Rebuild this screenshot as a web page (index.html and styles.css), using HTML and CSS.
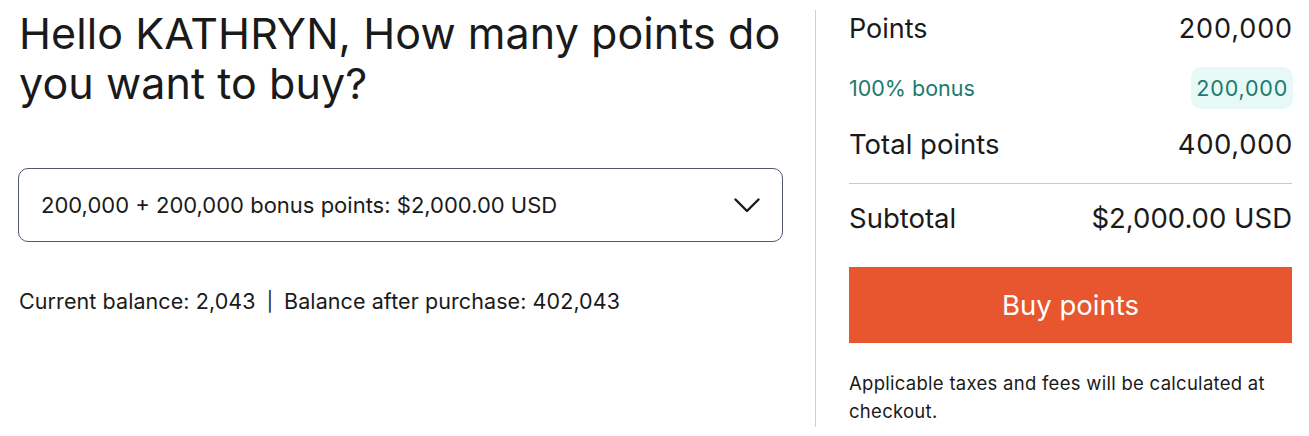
FILE: index.html
```html
<!DOCTYPE html>
<html>
<head>
<meta charset="utf-8">
<link rel="stylesheet" href="styles.css">
</head>
<body>
<div class="page">
  <div class="left">
    <h1 class="title">Hello KATHRYN, How many points do you want to buy?</h1>
    <div class="select">
      <span class="select-text">200,000 + 200,000 bonus points: $2,000.00 USD</span>
      <svg class="chev" width="26" height="15" viewBox="0 0 26 15"><path d="M1.5 1.5 L13 13 L24.5 1.5" fill="none" stroke="#1a1a1a" stroke-width="2.4" stroke-linecap="round" stroke-linejoin="round"/></svg>
    </div>
    <p class="balance">Current balance: 2,043<span class="pipe">|</span>Balance after purchase: 402,043</p>
  </div>
  <div class="divider"></div>
  <div class="right">
    <div class="row row-points"><span>Points</span><span class="num">200,000</span></div>
    <div class="row row-bonus"><span>100% bonus</span><span class="badge">200,000</span></div>
    <div class="row row-total"><span>Total points</span><span class="num2">400,000</span></div>
    <hr class="sep">
    <div class="row row-sub"><span>Subtotal</span><span>$2,000.00 USD</span></div>
    <button class="buy">Buy points</button>
    <p class="note">Applicable taxes and fees will be calculated at checkout.</p>
  </div>
</div>
</body>
</html>
```
FILE: styles.css
```css
html, body { margin: 0; padding: 0; background: #fff; }
body { font-family: Inter, "Noto Sans", sans-serif; color: #1a1a1a; }
.page { display: flex; align-items: flex-start; padding: 10px 17px 0 18px; }
.left { width: 765px; flex: none; }
.title { font-size: 43px; font-weight: 400; line-height: 50px; margin: -2px 0 0 1px; letter-spacing: 0.08px; }
.select { margin-top: 60px; height: 72px; border: 1px solid #4f596b; border-radius: 10px; display: flex; align-items: center; justify-content: space-between; padding: 0 22px 0 22px; }
.select-text { font-size: 22px; line-height: 26px; }
.chev { display: block; }
.balance { font-size: 21.5px; line-height: 26px; margin: 46px 0 0 1px; letter-spacing: 0.08px; }
.pipe { margin: 0 11px; font-size: 19px; position: relative; top: -1px; }
.divider { width: 1px; background: #d0d0d0; margin: 0 33px 0 32px; height: 417px; flex: none; }
.right { flex: 1; }
.row { display: flex; justify-content: space-between; align-items: center; }
.row-points { font-size: 27px; line-height: 38px; }
.num { letter-spacing: 0.9px; margin-right: -1px; }
.num2 { letter-spacing: 0.6px; margin-right: -1px; }
.row-bonus { font-size: 21.5px; line-height: 26px; color: #1d7a6e; height: 42px; margin-top: 19px; }
.badge { background: #e7f9f7; border-radius: 10px; padding: 8px 5px; margin-right: -1px; letter-spacing: 0.8px; }
.row-total { font-size: 27.5px; line-height: 38px; margin-top: 16px; }
.sep { border: 0; border-top: 1px solid #c8c8c8; margin: 20px 0 0 0; }
.row-sub { font-size: 27.5px; line-height: 38px; margin-top: 15px; }
.buy { display: block; width: 100%; height: 76px; margin-top: 30px; border: 0; background: #e8562f; color: #fff; font-family: inherit; font-size: 27.5px; line-height: 38px; padding: 0; }
.note { font-size: 18.5px; line-height: 28px; margin: 26px 0 0 0; letter-spacing: 0.28px; }
```
